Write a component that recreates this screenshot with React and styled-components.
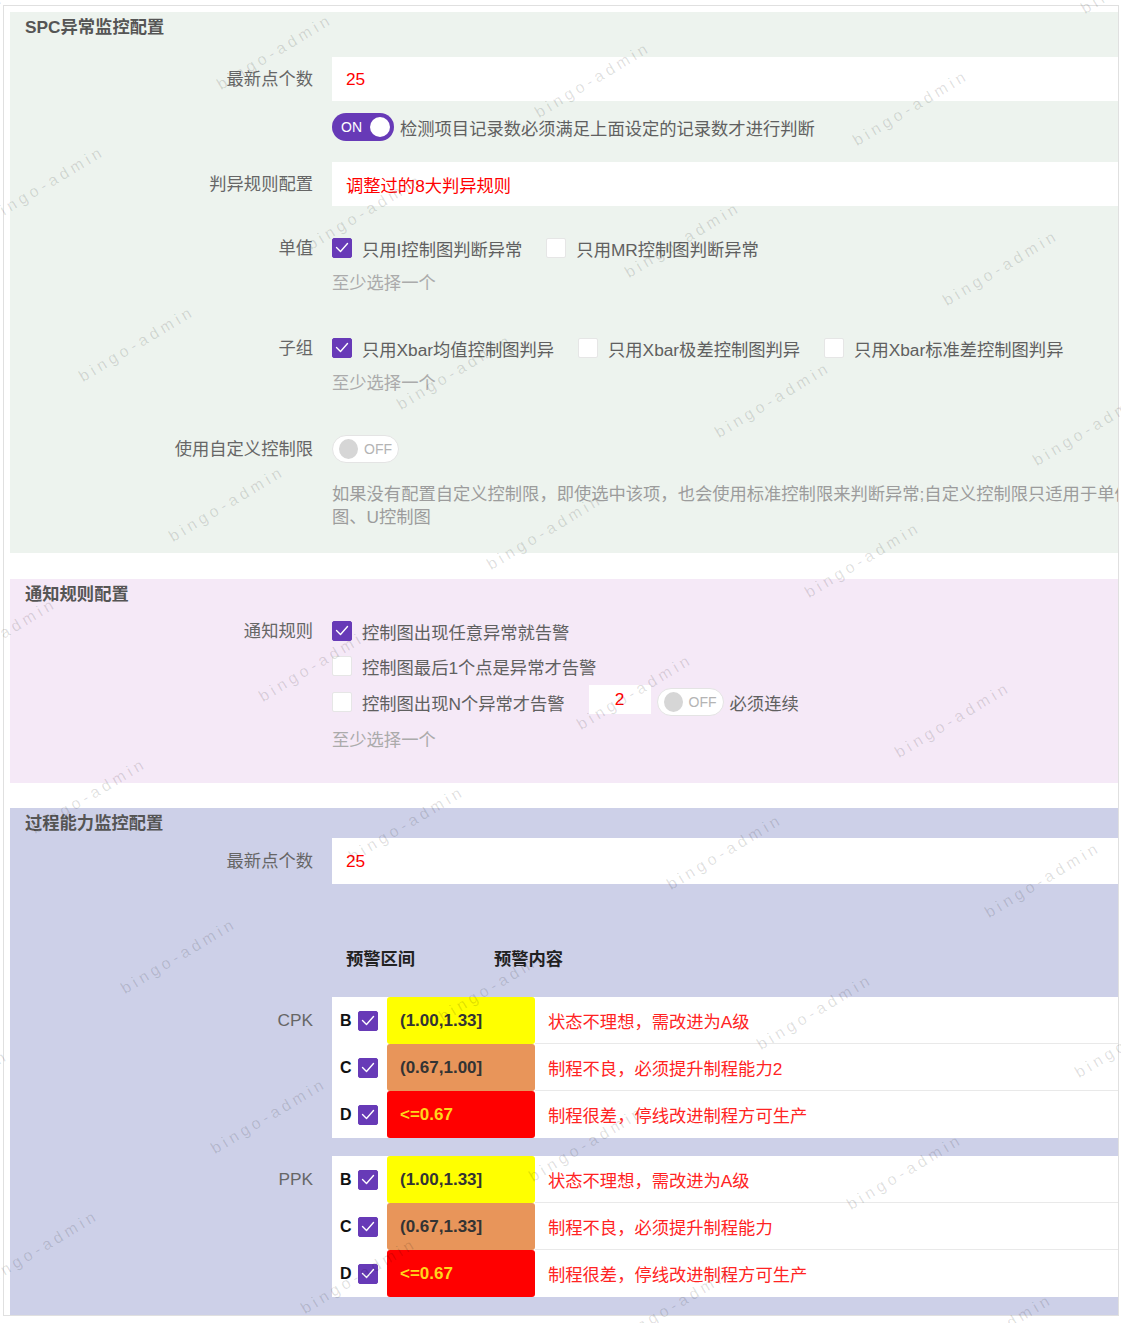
import React from 'react';
import styled, { createGlobalStyle } from 'styled-components';

const GlobalStyle = createGlobalStyle`
  html, body {
    margin: 0;
    padding: 0;
    background: #ffffff;
  }
  body {
    font-family: "Liberation Sans", "Noto Sans CJK SC", sans-serif;
    color: #666666;
  }
  * {
    box-sizing: border-box;
  }
`;

const Page = styled.div`
  position: relative;
  width: 1121px;
  height: 1323px;
  overflow: hidden;
  padding: 5px 0 0 3px;
`;

const Frame = styled.div`
  width: 1116px;
  border: 1px solid #e0e0e0;
  padding: 6px 0 0 6px;
  overflow: hidden;
  background: #ffffff;
`;

const Content = styled.div`
  width: 1130px;
`;

const Section = styled.section`
  background: ${(p) => p.$bg};
  padding: 3px 0 ${(p) => p.$pb}px 0;
  margin-bottom: ${(p) => p.$mb || 0}px;
`;

const SectionTitle = styled.h3`
  margin: 0;
  padding-left: 15px;
  font-size: 17.3px;
  line-height: 24px;
  font-weight: 700;
  color: #555555;
`;

const FormItem = styled.div`
  display: flex;
  align-items: flex-start;
  margin-top: ${(p) => p.$gap}px;
`;

const Label = styled.div`
  width: 303px;
  flex-shrink: 0;
  margin-right: 19px;
  text-align: right;
  font-size: 17.3px;
  line-height: ${(p) => p.$lh || 24}px;
  color: #666666;
  white-space: nowrap;
`;

const Control = styled.div`
  flex: 1;
  min-width: 0;
`;

const TextInput = styled.input`
  display: block;
  width: 100%;
  height: ${(p) => p.$h || 44}px;
  border: none;
  outline: none;
  background: #ffffff;
  padding: 0 14px;
  font-family: inherit;
  font-size: 17.3px;
  color: #ff0000;
`;

const NumInput = styled.input`
  width: 62px;
  height: 29px;
  border: none;
  outline: none;
  background: #ffffff;
  text-align: center;
  font-family: inherit;
  font-size: 17.3px;
  color: #ff0000;
  margin: -6px 6px 0 24px;
`;

const InlineRow = styled.div`
  display: flex;
  align-items: center;
  height: ${(p) => p.$h || 24}px;
  margin-top: ${(p) => p.$gap || 0}px;
  font-size: 17.3px;
  color: #606060;
  white-space: nowrap;
`;

const ToggleBox = styled.span`
  display: inline-flex;
  align-items: center;
  flex-shrink: 0;
  width: ${(p) => (p.$on ? 62 : 67)}px;
  height: 28px;
  border-radius: 14px;
  padding: ${(p) => (p.$on ? '0 4px 0 9px' : '0 6px')};
  justify-content: ${(p) => (p.$on ? 'space-between' : 'flex-start')};
  background: ${(p) => (p.$on ? '#673ab7' : '#ffffff')};
  border: ${(p) => (p.$on ? 'none' : '1px solid #e4e4e4')};
  font-size: 14px;
  color: ${(p) => (p.$on ? '#ffffff' : '#b4b4b4')};
  margin-right: 6px;
`;

const Knob = styled.span`
  width: 20px;
  height: 20px;
  border-radius: 50%;
  background: ${(p) => (p.$on ? '#ffffff' : '#d6d6d6')};
  margin-right: ${(p) => (p.$on ? 0 : 6)}px;
`;

const Toggle = ({ on }) => (
  <ToggleBox $on={on}>
    {on ? (
      <>
        <span>ON</span>
        <Knob $on />
      </>
    ) : (
      <>
        <Knob />
        <span>OFF</span>
      </>
    )}
  </ToggleBox>
);

const Box = styled.span`
  display: inline-flex;
  align-items: center;
  justify-content: center;
  flex-shrink: 0;
  width: 20px;
  height: 20px;
  border-radius: 2px;
  background: ${(p) => (p.$checked ? '#673ab7' : '#ffffff')};
  border: 1px solid ${(p) => (p.$checked ? '#673ab7' : '#e6e6e6')};
`;

const Check = ({ checked }) => (
  <Box $checked={checked}>
    {checked && (
      <svg width="18" height="18" viewBox="0 0 18 18">
        <polyline points="3.5,8.5 7.5,12.5 14.5,4.5" fill="none" stroke="#ffffff" strokeWidth="1.4" strokeLinecap="round" strokeLinejoin="round" />
      </svg>
    )}
  </Box>
);

const CheckItem = styled.span`
  display: inline-flex;
  align-items: center;
  gap: 10px;
  margin-right: ${(p) => (p.$last ? 0 : 24)}px;
`;

const Hint = styled.div`
  margin-top: ${(p) => p.$gap || 11}px;
  font-size: 17.3px;
  line-height: 24px;
  color: #ababab;
`;

const HelpText = styled.div`
  margin-top: 20px;
  font-size: 17.3px;
  line-height: 23px;
  color: #9c9c9c;
`;

const TableHead = styled.div`
  display: flex;
  padding-left: 14px;
  font-size: 17.3px;
  line-height: 24px;
  font-weight: 700;
  color: #222222;

  span {
    width: 148px;
  }
`;

const Block = styled.div`
  background: #ffffff;
`;

const GradeRow = styled.div`
  display: grid;
  grid-template-columns: 55px 148px 1fr;
  height: 47px;
`;

const GradeCell = styled.div`
  display: flex;
  align-items: center;
  gap: 6px;
  padding-left: 8px;
  font-size: 16px;
  font-weight: 700;
  color: #111111;
`;

const RangeCell = styled.div`
  display: flex;
  align-items: center;
  padding-left: 13px;
  background: ${(p) => p.$bg};
  color: ${(p) => p.$fg};
  font-size: 17px;
  font-weight: 700;
  border-radius: 3px;
`;

const MsgCell = styled.div`
  display: flex;
  align-items: center;
  padding-left: 13px;
  font-size: 17.3px;
  color: #ff2323;
  border-bottom: ${(p) => (p.$last ? 'none' : '1px solid #e9e9e9')};
`;

const WatermarkLayer = styled.div`
  position: absolute;
  inset: 0;
  pointer-events: none;
  overflow: hidden;
  z-index: 5;
`;

const Mark = styled.span`
  position: absolute;
  transform: translate(-50%, -50%) rotate(-31deg);
  font-family: "Liberation Sans", sans-serif;
  font-size: 16px;
  letter-spacing: 4px;
  color: rgba(0, 0, 0, 0.13);
  white-space: nowrap;
`;

const marks = [];
for (let j = -1; j <= 9; j++) {
  for (let i = -3; i <= 4; i++) {
    const x = 275 + i * 318 + j * 90;
    const y = 52 + i * 28 + j * 160;
    if (x > -120 && x < 1240 && y > -60 && y < 1390) marks.push({ x, y });
  }
}

const cpk = [
  { grade: 'B', range: '(1.00,1.33]', bg: '#ffff00', fg: '#333333', msg: '状态不理想，需改进为A级' },
  { grade: 'C', range: '(0.67,1.00]', bg: '#e8955a', fg: '#333333', msg: '制程不良，必须提升制程能力2' },
  { grade: 'D', range: '<=0.67', bg: '#ff0000', fg: '#ffd51c', msg: '制程很差，停线改进制程方可生产' },
];

const ppk = [
  { grade: 'B', range: '(1.00,1.33]', bg: '#ffff00', fg: '#333333', msg: '状态不理想，需改进为A级' },
  { grade: 'C', range: '(0.67,1.33]', bg: '#e8955a', fg: '#333333', msg: '制程不良，必须提升制程能力' },
  { grade: 'D', range: '<=0.67', bg: '#ff0000', fg: '#ffd51c', msg: '制程很差，停线改进制程方可生产' },
];

const GradeBlock = ({ rows }) => (
  <Block>
    {rows.map((r, idx) => (
      <GradeRow key={r.grade}>
        <GradeCell>
          <span>{r.grade}</span>
          <Check checked />
        </GradeCell>
        <RangeCell $bg={r.bg} $fg={r.fg}>{r.range}</RangeCell>
        <MsgCell $last={idx === rows.length - 1}>{r.msg}</MsgCell>
      </GradeRow>
    ))}
  </Block>
);

const App = () => {
  return (
    <Page>
      <GlobalStyle />
      <Frame>
        <Content>
          <Section $bg="#edf3ee" $pb={24} $mb={26}>
            <SectionTitle>SPC异常监控配置</SectionTitle>
            <FormItem $gap={18}>
              <Label $lh={44}>最新点个数</Label>
              <Control>
                <TextInput readOnly value="25" />
              </Control>
            </FormItem>
            <FormItem $gap={11}>
              <Label $lh={30} />
              <Control>
                <InlineRow $h={30}>
                  <Toggle on />
                  检测项目记录数必须满足上面设定的记录数才进行判断
                </InlineRow>
              </Control>
            </FormItem>
            <FormItem $gap={20}>
              <Label $lh={44}>判异规则配置</Label>
              <Control>
                <TextInput readOnly value="调整过的8大判异规则" />
              </Control>
            </FormItem>
            <FormItem $gap={30}>
              <Label>单值</Label>
              <Control>
                <InlineRow>
                  <CheckItem><Check checked />只用I控制图判断异常</CheckItem>
                  <CheckItem $last><Check />只用MR控制图判断异常</CheckItem>
                </InlineRow>
                <Hint>至少选择一个</Hint>
              </Control>
            </FormItem>
            <FormItem $gap={41}>
              <Label>子组</Label>
              <Control>
                <InlineRow>
                  <CheckItem><Check checked />只用Xbar均值控制图判异</CheckItem>
                  <CheckItem><Check />只用Xbar极差控制图判异</CheckItem>
                  <CheckItem $last><Check />只用Xbar标准差控制图判异</CheckItem>
                </InlineRow>
                <Hint>至少选择一个</Hint>
              </Control>
            </FormItem>
            <FormItem $gap={40}>
              <Label $lh={28}>使用自定义控制限</Label>
              <Control>
                <InlineRow $h={28}>
                  <Toggle />
                </InlineRow>
                <HelpText>
                  如果没有配置自定义控制限，即使选中该项，也会使用标准控制限来判断异常;自定义控制限只适用于单值图、U控制图
                </HelpText>
              </Control>
            </FormItem>
          </Section>

          <Section $bg="#f5e9f7" $pb={31} $mb={25}>
            <SectionTitle>通知规则配置</SectionTitle>
            <FormItem $gap={13}>
              <Label>通知规则</Label>
              <Control>
                <InlineRow>
                  <CheckItem $last><Check checked />控制图出现任意异常就告警</CheckItem>
                </InlineRow>
                <InlineRow $gap={11}>
                  <CheckItem $last><Check />控制图最后1个点是异常才告警</CheckItem>
                </InlineRow>
                <InlineRow $h={30} $gap={9}>
                  <CheckItem $last><Check />控制图出现N个异常才告警</CheckItem>
                  <NumInput readOnly value="2" />
                  <Toggle />
                  必须连续
                </InlineRow>
                <Hint>至少选择一个</Hint>
              </Control>
            </FormItem>
          </Section>

          <Section $bg="#cdd0e8" $pb={18}>
            <SectionTitle>过程能力监控配置</SectionTitle>
            <FormItem $gap={3}>
              <Label $lh={46}>最新点个数</Label>
              <Control>
                <TextInput $h={46} readOnly value="25" />
              </Control>
            </FormItem>
            <FormItem $gap={63}>
              <Label />
              <Control>
                <TableHead>
                  <span>预警区间</span>
                  <span>预警内容</span>
                </TableHead>
              </Control>
            </FormItem>
            <FormItem $gap={26}>
              <Label $lh={47}>CPK</Label>
              <Control>
                <GradeBlock rows={cpk} />
              </Control>
            </FormItem>
            <FormItem $gap={18}>
              <Label $lh={47}>PPK</Label>
              <Control>
                <GradeBlock rows={ppk} />
              </Control>
            </FormItem>
          </Section>
        </Content>
      </Frame>
      <WatermarkLayer>
        {marks.map((m) => (
          <Mark key={`${m.x}-${m.y}`} style={{ left: m.x, top: m.y }}>
            bingo-admin
          </Mark>
        ))}
      </WatermarkLayer>
    </Page>
  );
};

export default App;
